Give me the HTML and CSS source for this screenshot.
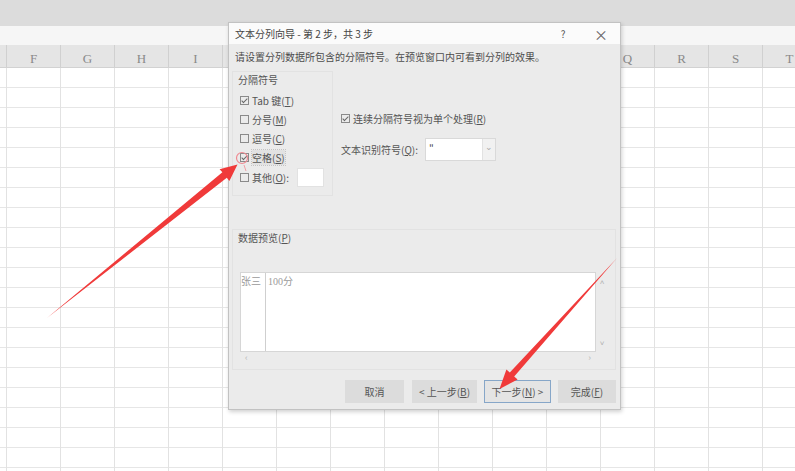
FILE: index.html
```html
<!DOCTYPE html>
<html>
<head>
    <title>文本分列向导</title>
    <link rel="stylesheet" href="styles.css">
</head>
<body>

<div class="ribbon"></div>
<div class="formula-bar"></div>
<div class="col-head">
    <span></span><span>F</span><span>G</span><span>H</span><span>I</span><span></span>
    <span></span><span></span><span></span><span></span><span></span><span></span>
    <span>Q</span><span>R</span><span>S</span><span>T</span>
</div>
<div class="sheet"></div>

<div class="dialog">
    <div class="titlebar">
        <span class="title">文本分列向导 - 第 2 步，共 3 步</span>
        <span class="tb-btn">?</span>
        <span class="tb-btn close">×</span>
    </div>
    <div class="dialog-body">
        <p class="intro">请设置分列数据所包含的分隔符号。在预览窗口内可看到分列的效果。</p>

        <div class="options">
            <div class="group delims">
                <div class="group-label">分隔符号</div>
                <label class="check"><span class="box on"></span>Tab 键(<u>T</u>)</label>
                <label class="check"><span class="box"></span>分号(<u>M</u>)</label>
                <label class="check"><span class="box"></span>逗号(<u>C</u>)</label>
                <label class="check"><span class="box on"></span><span class="focus">空格(<u>S</u>)</span></label>
                <label class="check last"><span class="box"></span>其他(<u>O</u>):<span class="other-input"></span></label>
            </div>
            <div class="side">
                <label class="check"><span class="box on"></span>连续分隔符号视为单个处理(<u>R</u>)</label>
                <div class="qualifier">
                    <span>文本识别符号(<u>Q</u>):</span>
                    <div class="select">
                        <span class="sel-value">"</span>
                        <span class="sel-arrow">⌄</span>
                    </div>
                </div>
            </div>
        </div>

        <div class="group preview">
            <div class="group-label">数据预览(<u>P</u>)</div>
            <div class="preview-wrap">
                <div class="preview-row">
                    <div class="preview-box">
                        <div class="pcol first">张三</div>
                        <div class="pcol">100分</div>
                    </div>
                    <div class="vscroll"><span>˄</span><span>˅</span></div>
                </div>
                <div class="hscroll"><span>‹</span><span>›</span></div>
            </div>
        </div>

        <div class="buttons">
            <button class="btn cancel">取消</button>
            <button class="btn back">&lt; 上一步(<u>B</u>)</button>
            <button class="btn next">下一步(<u>N</u>) &gt;</button>
            <button class="btn finish">完成(<u>F</u>)</button>
        </div>
    </div>
</div>

<!-- annotation arrows drawn over the screenshot -->
<svg class="annot" width="795" height="471" viewBox="0 0 795 471">
    <polygon points="47,318 222.4,172.2 219.6,169.2 237.5,164.5 229.4,181 226.8,177.8" fill="#f03a3a"/>
    <circle cx="242" cy="158" r="5.5" fill="none" stroke="#ef8a92" stroke-width="1.2"/>
    <line x1="244" y1="165" x2="246" y2="171" stroke="#f2a0a6" stroke-width="1"/>
    <polygon points="617,258 514.2,376.6 517.6,379.6 499.5,389 506.4,369.6 509.8,372.6" fill="#f03a3a"/>
</svg>

</body>
</html>
```

FILE: styles.css
```css
body {
    margin: 0;
    width: 795px;
    height: 471px;
    overflow: hidden;
    background: #ffffff;
    font-family: "Noto Sans CJK SC", sans-serif;
    position: relative;
}

.ribbon {
    height: 26px;
    background: #dcdcdc;
}

.formula-bar {
    height: 19px;
    background: #f6f6f6;
}

.col-head {
    display: flex;
    height: 23px;
    margin-left: -47px;
    background: #e5e5e5;
    border-bottom: 1px solid #d2d2d2;
    box-sizing: border-box;
}

.col-head span {
    flex: 0 0 54px;
    box-sizing: border-box;
    border-right: 1px solid #d0d0d0;
    text-align: center;
    padding-top: 5px;
    line-height: 18px;
    font-family: "Liberation Serif", serif;
    font-size: 13px;
    color: #8a8a8a;
}

.sheet {
    height: 403px;
    background-image:
        linear-gradient(to right, #e2e2e2 1px, transparent 1px),
        linear-gradient(to bottom, #e6e6e6 1px, transparent 1px);
    background-size: 54px 20px;
    background-position: 6px 19px;
}

/* dialog window */
.dialog {
    position: absolute;
    left: 228px;
    top: 22px;
    width: 393px;
    height: 388px;
    box-sizing: border-box;
    border: 1px solid #c2c2c2;
    background: #ebebeb;
    box-shadow: 1px 2px 4px rgba(0, 0, 0, 0.18);
    color: #555;
    font-size: 10px;
}

.titlebar {
    display: flex;
    align-items: center;
    height: 21px;
    background: #fbfbfb;
    padding-left: 6px;
}

.title {
    flex: 1;
    color: #444;
    font-size: 10px;
}

.tb-btn {
    width: 38px;
    text-align: center;
    color: #555;
    font-size: 10px;
}

.tb-btn.close {
    font-size: 14px;
    color: #666;
}

.intro {
    margin: 0;
    padding: 6px 0 0 6px;
    line-height: 14px;
    color: #4d4d4d;
}

.options {
    display: flex;
    margin-top: 7px;
}

.group {
    border: 1px solid #e2e2e2;
    box-sizing: border-box;
}

.group-label {
    height: 16px;
    line-height: 16px;
    padding-left: 5px;
    color: #555;
}

.delims {
    margin-left: 3px;
    width: 101px;
    height: 125px;
}

.delims .group-label {
    margin-bottom: 3px;
}

.delims .check {
    padding-left: 7px;
}

.check {
    display: flex;
    align-items: center;
    height: 19px;
    color: #555;
}

.check.last {
    height: 21px;
}

.box {
    position: relative;
    width: 9px;
    height: 9px;
    box-sizing: border-box;
    border: 1px solid #8a8a8a;
    margin-right: 3px;
}

.box.on::after {
    content: "";
    position: absolute;
    left: 2px;
    top: 0px;
    width: 2px;
    height: 5px;
    border-right: 1px solid #666;
    border-bottom: 1px solid #666;
    transform: rotate(45deg);
}

.focus {
    background: #e2e2e2;
    outline: 1px dotted #c4c4c4;
}

.other-input {
    width: 27px;
    height: 19px;
    margin-left: 8px;
    background: #ffffff;
    border: 1px solid #e2e2e2;
    box-sizing: border-box;
}

.side {
    margin-left: 8px;
    padding-top: 38px;
}

.qualifier {
    display: flex;
    align-items: center;
    height: 23px;
    margin-top: 10px;
}

.select {
    display: flex;
    width: 71px;
    height: 23px;
    margin-left: 7px;
    background: #ffffff;
    border: 1px solid #d9d9d9;
    box-sizing: border-box;
}

.sel-value {
    flex: 1;
    padding-left: 3px;
    line-height: 18px;
    color: #444;
}

.sel-arrow {
    width: 12px;
    background: #f1f1f1;
    border-left: 1px solid #e2e2e2;
    text-align: center;
    color: #aaa;
    font-size: 9px;
    line-height: 16px;
}

.preview {
    margin: 33px 0 0 3px;
    width: 384px;
    height: 141px;
}

.preview-wrap {
    margin: 26px 0 0 7px;
    width: 368px;
}

.preview-row {
    display: flex;
}

.preview-box {
    display: flex;
    width: 356px;
    height: 80px;
    background: #ffffff;
    border: 1px solid #d6d6d6;
    box-sizing: border-box;
    font-family: "Liberation Serif", "Noto Sans CJK SC", serif;
    color: #9a9a9a;
    font-size: 10px;
}

.pcol {
    padding: 3px 0 0 2px;
    line-height: 12px;
}

.pcol.first {
    width: 24px;
    padding-left: 0;
    border-right: 1px solid #cfcfcf;
}

.vscroll {
    display: flex;
    flex-direction: column;
    justify-content: space-between;
    width: 12px;
    height: 80px;
    text-align: center;
    color: #b0b0b0;
    font-size: 8px;
    padding: 4px 0 4px;
    box-sizing: border-box;
}

.hscroll {
    display: flex;
    justify-content: space-between;
    height: 10px;
    width: 356px;
    padding: 1px 5px 0;
    box-sizing: border-box;
    color: #b8b8b8;
    font-size: 9px;
    line-height: 9px;
}

.buttons {
    display: flex;
    justify-content: flex-end;
    gap: 7px;
    margin-top: 10px;
    padding-right: 4px;
}

.btn {
    height: 23px;
    padding: 0;
    background: #dcdcdc;
    border: 1px solid #dcdcdc;
    color: #555;
    font-family: "Noto Sans CJK SC", sans-serif;
    font-size: 10px;
}

.btn.cancel { width: 59px; margin-right: 1px; }
.btn.back { width: 65px; }
.btn.next {
    width: 67px;
    background: #e4e4e4;
    border-color: #86a6c8;
}
.btn.finish { width: 58px; }

.annot {
    position: absolute;
    left: 0;
    top: 0;
}
```
